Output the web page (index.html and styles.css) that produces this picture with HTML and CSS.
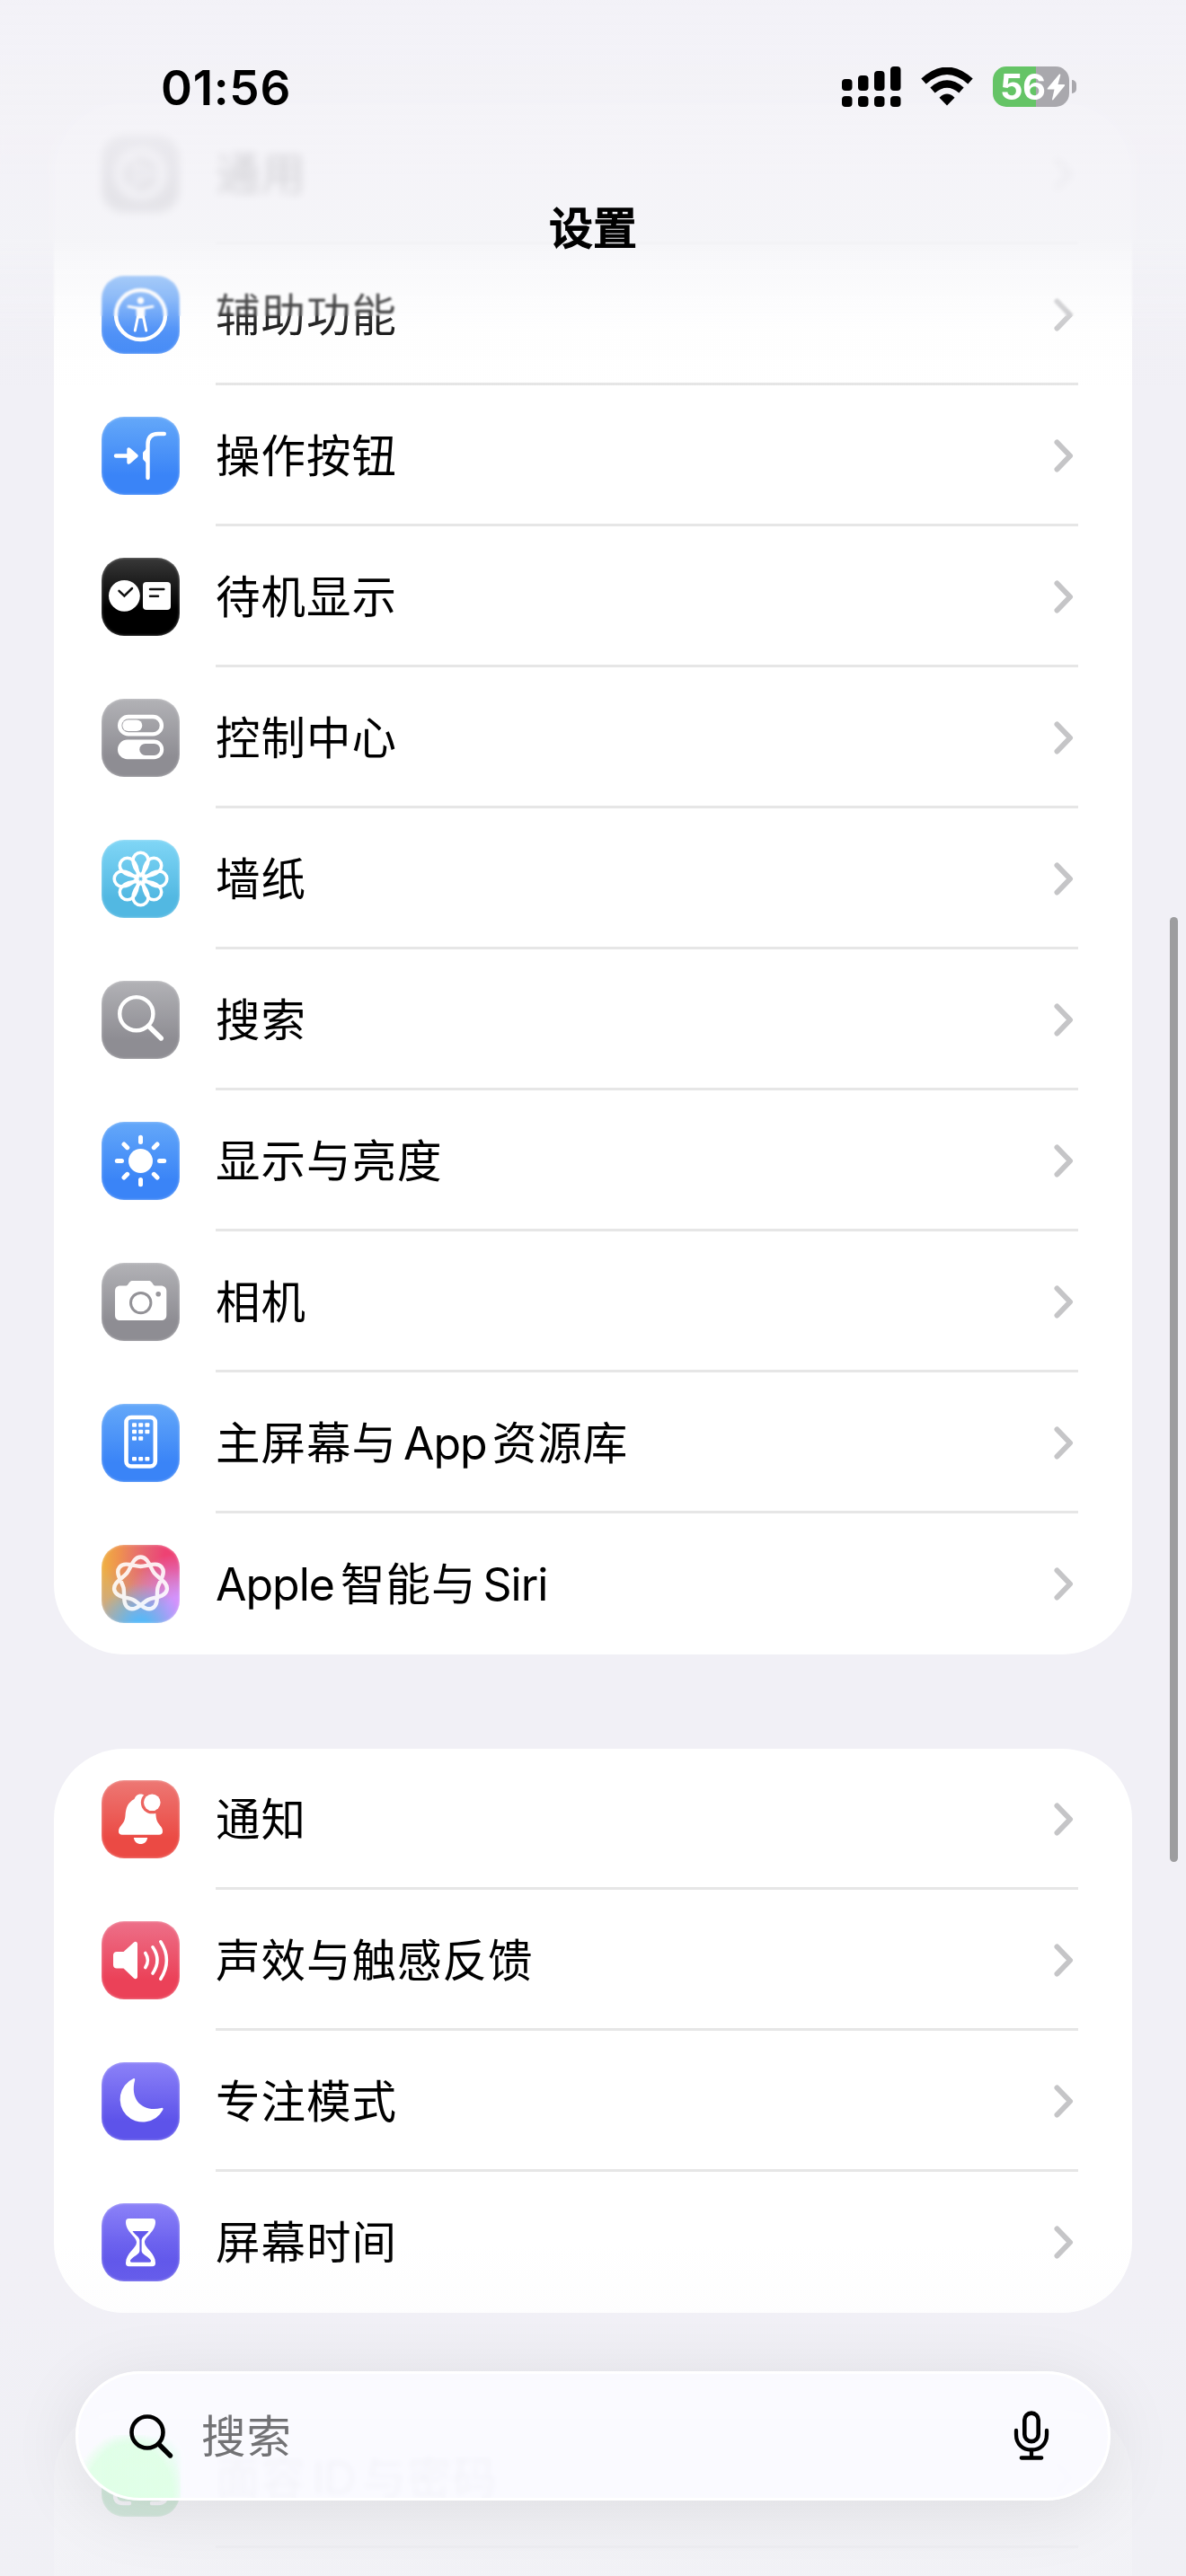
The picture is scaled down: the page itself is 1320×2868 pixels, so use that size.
FILE: index.html
```html
<!DOCTYPE html>
<html lang="zh-CN">
<head>
    <meta charset="utf-8">
    <title>设置</title>
    <link rel="stylesheet" href="styles.css">
</head>

<body>
<div class="screen">

    <!-- list -->
    <div class="list">
        <div class="group">
            <div class="row">
                <div class="icon gray">
                    <svg viewBox="0 0 87 87"><g fill="none" stroke="#fff"><circle cx="43.5" cy="43.5" r="27" stroke-width="6" stroke-dasharray="4 2"/><circle cx="43.5" cy="43.5" r="22" stroke-width="4"/><circle cx="43.5" cy="43.5" r="7" stroke-width="3"/><path d="M50 43.5h16M40 38l-8-14M40 49l-8 14" stroke-width="3"/></g></svg>
                </div>
                <div class="cell"><span class="label">通用</span><svg class="arrow" viewBox="0 0 22 37"><path d="M3.5 3.5L18 18.5L3.5 33.5"/></svg></div>
            </div>
            <div class="row">
                <div class="icon blue">
                    <svg viewBox="0 0 87 87"><circle cx="43.5" cy="43.5" r="27.5" fill="none" stroke="#fff" stroke-width="4.4"/><circle cx="43.5" cy="27.8" r="3.7" fill="#fff"/><path d="M30 34.2L40 36L40.4 46L37.3 61M57 34.2L47 36L46.6 46L49.7 61" fill="none" stroke="#fff" stroke-width="3" stroke-linecap="round" stroke-linejoin="round"/><path d="M39.5 34.5h8l-.3 13h-7.4z" fill="#fff"/></svg>
                </div>
                <div class="cell"><span class="label">辅助功能</span><svg class="arrow" viewBox="0 0 22 37"><path d="M3.5 3.5L18 18.5L3.5 33.5"/></svg></div>
            </div>
            <div class="row">
                <div class="icon blue">
                    <svg viewBox="0 0 87 87"><path d="M16 43.5H31M69.8 19H63C55.500 19 51.500 23 51.500 31V68" fill="none" stroke="#fff" stroke-width="4.4" stroke-linecap="round"/><path d="M28.300 36.500C28.300 34 30.500 33.600 32 35L40 42C41 43 41 44 40 45L32 52C30.500 53.400 28.300 53 28.300 50.500zM51 36h-2c0 2-3 2-3 5v5c0 3 3 3 3 5h2z" fill="#fff"/></svg>
                </div>
                <div class="cell"><span class="label">操作按钮</span><svg class="arrow" viewBox="0 0 22 37"><path d="M3.5 3.5L18 18.5L3.5 33.5"/></svg></div>
            </div>
            <div class="row">
                <div class="icon black">
                    <svg viewBox="0 0 87 87"><circle cx="25.4" cy="42.3" r="17.4" fill="#fff"/><rect x="46" y="27" width="31" height="31" rx="4" fill="#fff"/><path d="M19.500 36.800L25.400 42.500L34 34" fill="none" stroke="#111" stroke-width="2.500" stroke-linecap="round"/><path d="M54 35H69.300M54 42.800H63" stroke="#111" stroke-width="2.500" stroke-linecap="round"/></svg>
                </div>
                <div class="cell"><span class="label">待机显示</span><svg class="arrow" viewBox="0 0 22 37"><path d="M3.5 3.5L18 18.5L3.5 33.5"/></svg></div>
            </div>
            <div class="row">
                <div class="icon gray">
                    <svg viewBox="0 0 87 87"><rect x="20.200" y="20" width="46.700" height="19.400" rx="9.700" fill="none" stroke="#fff" stroke-width="4.400"/><rect x="23.300" y="23.500" width="22" height="12.500" rx="6.200" fill="#fff"/><rect x="18" y="45.600" width="51.200" height="21.600" rx="10.800" fill="#fff"/><rect x="42.300" y="50" width="22.800" height="12.900" rx="6.400" fill="#96959b"/></svg>
                </div>
                <div class="cell"><span class="label">控制中心</span><svg class="arrow" viewBox="0 0 22 37"><path d="M3.5 3.5L18 18.5L3.5 33.5"/></svg></div>
            </div>
            <div class="row">
                <div class="icon cyan">
                    <svg viewBox="0 0 87 87">
                        <defs><path id="petal" d="M43.500 39.500C37 33 35 28 35 22.700a8.500 8.500 0 0 1 17 0C52 28 50 33 43.500 39.500z"/></defs>
                        <g fill="none" stroke="#fff" stroke-width="3.600">
                            <use href="#petal"/>
                            <use href="#petal" transform="rotate(45 43.5 43.5)"/>
                            <use href="#petal" transform="rotate(90 43.5 43.5)"/>
                            <use href="#petal" transform="rotate(135 43.5 43.5)"/>
                            <use href="#petal" transform="rotate(180 43.5 43.5)"/>
                            <use href="#petal" transform="rotate(225 43.5 43.5)"/>
                            <use href="#petal" transform="rotate(270 43.5 43.5)"/>
                            <use href="#petal" transform="rotate(315 43.5 43.5)"/>
                        </g>
                    </svg>
                </div>
                <div class="cell"><span class="label">墙纸</span><svg class="arrow" viewBox="0 0 22 37"><path d="M3.5 3.5L18 18.5L3.5 33.5"/></svg></div>
            </div>
            <div class="row">
                <div class="icon gray">
                    <svg viewBox="0 0 87 87"><circle cx="38.800" cy="36.700" r="18.600" fill="none" stroke="#fff" stroke-width="4.400"/><path d="M52.500 50.500L66.300 64" stroke="#fff" stroke-width="5.400" stroke-linecap="round"/></svg>
                </div>
                <div class="cell"><span class="label">搜索</span><svg class="arrow" viewBox="0 0 22 37"><path d="M3.5 3.5L18 18.5L3.5 33.5"/></svg></div>
            </div>
            <div class="row">
                <div class="icon blue">
                    <svg viewBox="0 0 87 87"><circle cx="43.500" cy="43.500" r="13.500" fill="#fff"/><path d="M43.500 17.300v5.200M43.500 64.500v5.200M17.300 43.500h5.200M64.500 43.500h5.200M25 25l3.700 3.700M58.300 58.300l3.700 3.700M62 25l-3.700 3.700M28.700 58.300l-3.700 3.700" stroke="#fff" stroke-width="5" stroke-linecap="round"/></svg>
                </div>
                <div class="cell"><span class="label">显示与亮度</span><svg class="arrow" viewBox="0 0 22 37"><path d="M3.5 3.5L18 18.5L3.5 33.5"/></svg></div>
            </div>
            <div class="row">
                <div class="icon gray">
                    <svg viewBox="0 0 87 87"><path d="M21 25.500h6.500c2 0 3-4.700 6-5.500h20c3 .8 4 5.500 6 5.500H66c4 0 6.300 2.300 6.300 6V58c0 4-2.300 6-6.300 6H21c-4 0-6-2-6-6V31.500c0-3.700 2-6 6-6z" fill="#fff"/><circle cx="43.700" cy="44.600" r="11.200" fill="none" stroke="#939297" stroke-width="3"/><circle cx="63.200" cy="34.800" r="2.800" fill="#98979c"/></svg>
                </div>
                <div class="cell"><span class="label">相机</span><svg class="arrow" viewBox="0 0 22 37"><path d="M3.5 3.5L18 18.5L3.5 33.5"/></svg></div>
            </div>
            <div class="row">
                <div class="icon blue">
                    <svg viewBox="0 0 87 87"><rect x="27.500" y="15" width="32.300" height="54.500" rx="5.500" fill="none" stroke="#fff" stroke-width="4.600"/><g fill="#fff"><rect x="34" y="21.200" width="5" height="4.600" rx="1"/><rect x="41.200" y="21.200" width="5" height="4.600" rx="1"/><rect x="48.400" y="21.200" width="5" height="4.600" rx="1"/><rect x="34" y="28.700" width="5" height="4.600" rx="1"/><rect x="41.200" y="28.700" width="5" height="4.600" rx="1"/><rect x="48.400" y="28.700" width="5" height="4.600" rx="1"/><rect x="34" y="36.200" width="5" height="4.600" rx="1"/><rect x="41.200" y="36.200" width="5" height="4.600" rx="1"/><rect x="34" y="59" width="5" height="4.600" rx="1"/><rect x="41.200" y="59" width="5" height="4.600" rx="1"/><rect x="48.400" y="59" width="5" height="4.600" rx="1"/></g></svg>
                </div>
                <div class="cell"><span class="label">主屏幕与<span class="latin app">App</span>资源库</span><svg class="arrow" viewBox="0 0 22 37"><path d="M3.5 3.5L18 18.5L3.5 33.5"/></svg></div>
            </div>
            <div class="row">
                <div class="icon siri">
                    <svg viewBox="0 0 87 87"><path transform="translate(43.500 43.500)" d="M0-30C8.500-30 10.800-17.600 15.200-12.100S31.100-1.600 29.200 6.700S14.800 14.600 8.500 17.600S-5.300 30.700-13 27S-17.400 11.100-19 4.300S-28.800-12.100-23.500-18.700S-7-19.500 0-19.500S18.200-25.300 23.500-18.700S20.600-2.500 19 4.300S20.700 23.300 13 27S-2.200 20.600-8.500 17.600S-27.300 15-29.200 6.700S-19.600-6.600-15.200-12.100S-8.500-30 0-30Z" fill="none" stroke="#fff" stroke-opacity=".88" stroke-width="4.400"/></svg>
                </div>
                <div class="cell"><span class="label"><span class="latin apple">Apple</span>智能与<span class="latin name">Siri</span></span><svg class="arrow" viewBox="0 0 22 37"><path d="M3.5 3.5L18 18.5L3.5 33.5"/></svg></div>
            </div>
        </div>

        <div class="group">
            <div class="row">
                <div class="icon red">
                    <svg viewBox="0 0 87 87"><mask id="badge"><rect width="87" height="87" fill="#fff"/><circle cx="56.300" cy="24.800" r="12.500" fill="#000"/></mask><path mask="url(#badge)" d="M43.500 15.500C39.500 15.500 37.500 18 36.500 21C29 25 27 31 26.500 39C26 50 19 50 19 57C19 59.500 20.500 60.800 23 60.800H64C66.500 60.800 68 59.500 68 57C68 50 61 50 60.500 39C60 31 58 25 50.500 21C49.500 18 47.500 15.500 43.500 15.500z" fill="#fff"/><circle cx="56.300" cy="24.800" r="9.300" fill="#fff"/><path d="M35.800 64H51.200C50.500 68.500 47.500 71 43.500 71S36.500 68.500 35.800 64z" fill="#fff"/></svg>
                </div>
                <div class="cell"><span class="label">通知</span><svg class="arrow" viewBox="0 0 22 37"><path d="M3.5 3.5L18 18.5L3.5 33.5"/></svg></div>
            </div>
            <div class="row">
                <div class="icon pink">
                    <svg viewBox="0 0 87 87"><path d="M17 34H24.500L36 23.500C38 22 40 23 40 25.500V61.500C40 64 38 65 36 63.500L24.500 52.500H17C14.500 52.500 13 51 13 48.500V38C13 35.500 14.500 34 17 34z" fill="#fff"/><path d="M48.800 35.500Q54 43.500 48.800 51.500M57 28.800Q67 43.500 57 58M65.800 22.800Q79 43.500 65.800 64.300" fill="none" stroke="#fff" stroke-width="3.600" stroke-linecap="round"/></svg>
                </div>
                <div class="cell"><span class="label">声效与触感反馈</span><svg class="arrow" viewBox="0 0 22 37"><path d="M3.5 3.5L18 18.5L3.5 33.5"/></svg></div>
            </div>
            <div class="row">
                <div class="icon indigo">
                    <svg viewBox="0 0 87 87"><path d="M35.300 18.300C36.800 17.600 37.500 18.400 37.100 20C31 43 47 56 66.500 51C68.300 50.500 69 51.500 68.300 53A25.300 25.300 0 1 1 35.300 18.300z" fill="#fff"/></svg>
                </div>
                <div class="cell"><span class="label">专注模式</span><svg class="arrow" viewBox="0 0 22 37"><path d="M3.5 3.5L18 18.5L3.5 33.5"/></svg></div>
            </div>
            <div class="row">
                <div class="icon indigo">
                    <svg viewBox="0 0 87 87"><path d="M30.500 17H56.500C59 17 60 18.500 60 21C60 32 48 37 48 43.500S60 55.500 60 66.500C60 69 59 70.200 56.500 70.200H30.500C28 70.200 27 69 27 66.500C27 55.500 39 50 39 43.500S27 32 27 21C27 18.500 28 17 30.500 17z" fill="#fff"/><path d="M34.500 31H52.500C50 35 45 37.500 44.600 41V53C45 57 51 58.500 55 63.500Q55.500 65.800 53.500 65.800H33.500Q31.500 65.800 32 63.500C36 58.500 42 57 42.400 53V41C42 37.500 37 35 34.500 31z" fill="#6258ec"/></svg>
                </div>
                <div class="cell"><span class="label">屏幕时间</span><svg class="arrow" viewBox="0 0 22 37"><path d="M3.5 3.5L18 18.5L3.5 33.5"/></svg></div>
            </div>
        </div>

        <div class="group">
            <div class="row">
                <div class="icon green">
                    <svg viewBox="0 0 87 87"><path d="M15 31V24Q15 15 24 15H31M56 15H63Q72 15 72 24V31M72 56V63Q72 72 63 72H56M31 72H24Q15 72 15 63V56M33 33V39M54 33V39M44 33V46H41M33 54Q43.500 62 54 54" fill="none" stroke="#fff" stroke-width="4.400" stroke-linecap="round"/></svg>
                </div>
                <div class="cell"><span class="label">面容<span class="latin faceid">ID</span>与密码</span><svg class="arrow" viewBox="0 0 22 37"><path d="M3.5 3.5L18 18.5L3.5 33.5"/></svg></div>
            </div>
            <div class="row"></div>
        </div>
    </div>

    <!-- header over the list -->
    <div class="blur1"></div>
    <div class="blur2"></div>
    <div class="header">
        <div class="status">
            <span class="time">01:56</span>
            <div class="status-icons">
                <svg class="signal" viewBox="0 0 66 46"><rect x="0" y="14" width="11.500" height="13" rx="4"/><rect x="18" y="10" width="11.500" height="17" rx="4"/><rect x="36" y="5" width="11.500" height="22" rx="4"/><rect x="54" y="0" width="11.500" height="27" rx="4"/><rect x="0" y="33" width="11.500" height="12" rx="4"/><rect x="18" y="33" width="11.500" height="12" rx="4"/><rect x="36" y="33" width="11.500" height="12" rx="4"/><rect x="54" y="33" width="11.500" height="12" rx="4"/></svg>
                <svg class="wifi" viewBox="0 0 58 43"><path d="M29 42.500L20.500 33.700Q29 25.500 37.500 33.700z"/><path d="M13 25.500Q29 11.500 45 25.500" fill="none" stroke="#000" stroke-width="8"/><path d="M3 15.500Q29-8 55 15.500" fill="none" stroke="#000" stroke-width="8"/></svg>
                <div class="battery"><span class="percent">56</span><svg viewBox="0 0 21 30"><path d="M14 .5L.8 16.200Q0 17.500 1.500 17.500H8.500L6 28.500Q6 30 7.300 29L20 13.500Q20.800 12 19.200 12H12.500L15.300 1.500Q15.300 0 14 .5z" fill="#fff"/></svg></div>
                <span class="tip"></span>
            </div>
        </div>
        <div class="title">设置</div>
    </div>

    <div class="scrollbar"></div>

    <!-- bottom search field -->
    <div class="fade"></div>
    <div class="search">
        <svg class="glass" viewBox="0 0 51 51"><circle cx="21" cy="21" r="17.500" fill="none" stroke="#000" stroke-width="4.600"/><path d="M33.500 34L46.500 47" stroke="#000" stroke-width="5.400" stroke-linecap="round"/></svg>
        <span class="placeholder">搜索</span>
        <svg class="mic" viewBox="0 0 40 56"><g fill="none" stroke="#000" stroke-linecap="round"><rect x="12.300" y="2.600" width="15.400" height="31.500" rx="7.700" stroke-width="4.600"/><path d="M3 22V26.500C3 37 10 43.500 20 43.500S37 37 37 26.500V22M20 44V52M8.800 52.500H31.200" stroke-width="4.300"/></g></svg>
    </div>
</div>
</body>

</html>
```

FILE: styles.css
```css
body {
    margin: 0;
    background: #f1f0f6;
    font-family: Inter, "Noto Sans CJK SC", sans-serif;
    color: #000;
}

svg {
    display: block;
}

.screen {
    position: relative;
    width: 1320px;
    height: 2868px;
    overflow: hidden;
}

/* list */
.list {
    display: flex;
    flex-direction: column;
    gap: 105px;
    padding: 115px 60px 0;
}

.group {
    background: #fff;
    border-radius: 78px;
}

.row {
    display: flex;
    align-items: center;
    height: 157px;
    padding: 0 60px 0 53px;
}

.cell {
    flex: 1;
    display: flex;
    align-items: center;
    justify-content: space-between;
    box-sizing: border-box;
    height: 157px;
    margin-left: 40px;
    padding: 3px 5px 0 0;
    border-bottom: 3px solid #e6e6e6;
}

.row:last-child .cell {
    border-bottom-color: transparent;
}

.label {
    padding-top: 1px;
    font-size: 49.5px;
    line-height: 72px;
    letter-spacing: 1px;
    white-space: nowrap;
}

.latin {
    font-size: 50px;
    letter-spacing: -1px;
}

.app {
    margin: 0 6px 0 7px;
}

.apple {
    margin-right: 7px;
}

.name {
    margin-left: 7px;
}

.faceid {
    margin: 0 7px;
}

.arrow {
    width: 22px;
    height: 37px;
}

.arrow path {
    fill: none;
    stroke: #c5c5c7;
    stroke-width: 6;
    stroke-linecap: round;
    stroke-linejoin: round;
}

/* app icons */
.icon {
    width: 87px;
    height: 87px;
    border-radius: 25px;
    box-shadow: inset 0 0 3px rgba(255, 255, 255, 0.5);
}

.blue { background: linear-gradient(#64a8f9, #3a84f7 75%); }
.gray { background: linear-gradient(#b2b2b6, #8e8d93 75%); }
.cyan { background: linear-gradient(#80d6f6, #52b8e2 75%); }
.red { background: linear-gradient(#ed7874, #eb4a44 75%); }
.pink { background: linear-gradient(#ed7089, #eb4158 75%); }
.indigo { background: linear-gradient(#8c82f8, #5d53ea 75%); }
.black { background: linear-gradient(#383838, #000 65%); }
.green { background: linear-gradient(#6fdc8c, #42b860 75%); }

.siri {
    background:
        radial-gradient(circle at 50% 105%, #58b8f7 8%, rgba(88, 184, 247, 0) 48%),
        radial-gradient(circle at 100% 82%, #d392fb 12%, rgba(211, 146, 251, 0) 55%),
        radial-gradient(circle at 100% 15%, #ee4273 15%, rgba(238, 66, 115, 0) 75%),
        radial-gradient(circle at 5% 8%, #efae42 15%, rgba(239, 174, 66, 0) 80%),
        #b3a9b0;
}

/* header */
.blur1,
.blur2,
.header {
    position: absolute;
    top: 0;
    left: 0;
    width: 1320px;
}

.blur1 {
    height: 270px;
    backdrop-filter: blur(5px);
}

.blur2 {
    height: 352px;
    backdrop-filter: blur(1.2px);
}

.header {
    height: 440px;
    background: linear-gradient(rgba(243, 242, 247, 0.93) 0, rgba(243, 242, 247, 0.86) 200px, rgba(243, 243, 247, 0.86) 265px, rgba(244, 244, 248, 0.46) 305px, rgba(246, 246, 249, 0.36) 330px, rgba(248, 248, 250, 0.13) 365px, rgba(255, 255, 255, 0) 430px);
}

.status {
    display: flex;
    justify-content: space-between;
    align-items: flex-start;
    padding: 74px 122px 0 179px;
}

.time {
    font-size: 53px;
    line-height: 48px;
    font-weight: 600;
    letter-spacing: 0.7px;
}

.status-icons {
    display: flex;
    align-items: center;
    height: 45px;
}

.signal {
    width: 66px;
    height: 46px;
}

.wifi {
    width: 58px;
    height: 43px;
    margin-left: 22px;
}

.battery {
    display: flex;
    align-items: center;
    box-sizing: border-box;
    width: 85px;
    height: 45px;
    margin-left: 22px;
    padding-left: 8px;
    border-radius: 15px;
    background: linear-gradient(to right, #65c466 48px, #a9a8ad 48px);
}

.battery svg {
    width: 21px;
    height: 30px;
    margin-left: 2px;
}

.percent {
    width: 50px;
    font-size: 40px;
    line-height: 45px;
    font-weight: 700;
    letter-spacing: -0.5px;
    color: #fff;
}

.tip {
    width: 5px;
    height: 15px;
    margin-left: 3px;
    border-radius: 0 5px 5px 0;
    background: #a9a8ad;
}

.title {
    margin-top: 97px;
    font-size: 49px;
    line-height: 72px;
    font-weight: 500;
    -webkit-text-stroke: 1.3px #000;
    text-align: center;
}

.scrollbar {
    position: absolute;
    top: 1021px;
    right: 9px;
    width: 9px;
    height: 1052px;
    border-radius: 5px;
    background: #9d9d9f;
}

/* search */
.fade {
    position: absolute;
    left: 0;
    bottom: 0;
    width: 1320px;
    height: 370px;
    background: linear-gradient(rgba(240, 240, 245, 0), rgba(240, 240, 245, 0.12) 80px, rgba(240, 240, 245, 0.78) 200px, rgba(240, 240, 245, 0.85));
}

.search {
    position: absolute;
    left: 84px;
    top: 2640px;
    display: flex;
    align-items: center;
    box-sizing: border-box;
    width: 1152px;
    height: 144px;
    padding: 0 65px 0 56px;
    border: 3px solid #fff;
    border-radius: 72px;
    background:
        radial-gradient(ellipse at 50% 85%, rgba(222, 255, 229, 0.9) 58%, rgba(222, 255, 229, 0) 76%) 0 68px / 114px 74px no-repeat,
        rgba(252, 252, 255, 0.85);
    backdrop-filter: blur(3px) saturate(4);
    box-shadow: 0 12px 80px rgba(0, 0, 0, 0.09);
}

.glass {
    width: 51px;
    height: 51px;
    margin-right: 30px;
}

.placeholder {
    flex: 1;
    padding-top: 2px;
    font-size: 49.5px;
    letter-spacing: 1px;
    line-height: 72px;
    color: #727275;
}

.mic {
    width: 40px;
    height: 56px;
}
```
